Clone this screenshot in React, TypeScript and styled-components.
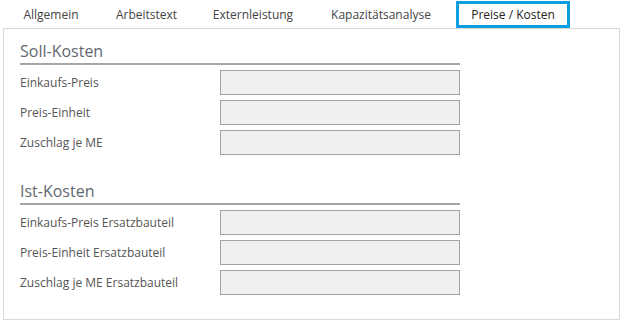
import React from "react";
import styled, { createGlobalStyle } from "styled-components";

const tabs = [
  { label: "Allgemein", width: 94 },
  { label: "Arbeitstext", width: 97 },
  { label: "Externleistung", width: 116 },
  { label: "Kapazitätsanalyse", width: 140 },
  { label: "Preise / Kosten", width: 114 },
];

const activeTab = "Preise / Kosten";

const sections = [
  {
    title: "Soll-Kosten",
    fields: ["Einkaufs-Preis", "Preis-Einheit", "Zuschlag je ME"],
  },
  {
    title: "Ist-Kosten",
    fields: [
      "Einkaufs-Preis Ersatzbauteil",
      "Preis-Einheit Ersatzbauteil",
      "Zuschlag je ME Ersatzbauteil",
    ],
  },
];

export default function App(): JSX.Element {
  return (
    <>
      <GlobalStyle />
      <Page>
        <TabBar>
          {tabs.map((tab) => (
            <Tab
              key={tab.label}
              width={tab.width}
              active={tab.label === activeTab}
            >
              {tab.label}
            </Tab>
          ))}
        </TabBar>
        <Panel>
          {sections.map((section) => (
            <Section key={section.title}>
              <SectionTitle>{section.title}</SectionTitle>
              <Rows>
                {section.fields.map((field) => (
                  <Row key={field}>
                    <Label>{field}</Label>
                    <Field type="text" readOnly />
                  </Row>
                ))}
              </Rows>
            </Section>
          ))}
        </Panel>
      </Page>
    </>
  );
}

const GlobalStyle = createGlobalStyle`
  body {
    margin: 0;
    background: #ffffff;
    font-family: "Open Sans", "Noto Sans", sans-serif;
  }
`;

const Page = styled.div`
  width: 621px;
  height: 320px;
  display: flex;
  flex-direction: column;
`;

const TabBar = styled.div`
  display: flex;
  align-items: stretch;
  height: 28px;
  padding: 1px 0 0 4px;
  box-sizing: border-box;
`;

const Tab = styled.div<{ active?: boolean; width: number }>`
  flex: 0 0 ${(p) => p.width}px;
  box-sizing: border-box;
  display: flex;
  align-items: center;
  justify-content: center;
  margin-left: ${(p) => (p.active ? "5px" : "0")};
  font-size: 12px;
  color: ${(p) => (p.active ? "#222222" : "#444444")};
  border: 3px solid ${(p) => (p.active ? "#0a9fe0" : "transparent")};
  white-space: nowrap;
`;

const Panel = styled.div`
  margin-left: 3px;
  width: 617px;
  height: 292px;
  box-sizing: border-box;
  border: 1px solid #d9d9d9;
  padding: 11px 0 0 16px;
  display: flex;
  flex-direction: column;
  gap: 25px;
`;

const Section = styled.div`
  display: flex;
  flex-direction: column;
`;

const SectionTitle = styled.div`
  width: 440px;
  height: 23px;
  line-height: 22px;
  font-size: 16px;
  color: #626870;
  border-bottom: 2px solid #a6a6a6;
`;

const Rows = styled.div`
  margin-top: 5px;
  display: flex;
  flex-direction: column;
  gap: 5px;
`;

const Row = styled.div`
  display: grid;
  grid-template-columns: 200px 240px;
  align-items: center;
  height: 25px;
`;

const Label = styled.span`
  font-size: 12px;
  color: #555555;
  white-space: nowrap;
`;

const Field = styled.input`
  width: 240px;
  height: 25px;
  box-sizing: border-box;
  margin: 0;
  border: 1px solid #a3a3a3;
  background: #f0f0f0;
  outline: none;
`;
